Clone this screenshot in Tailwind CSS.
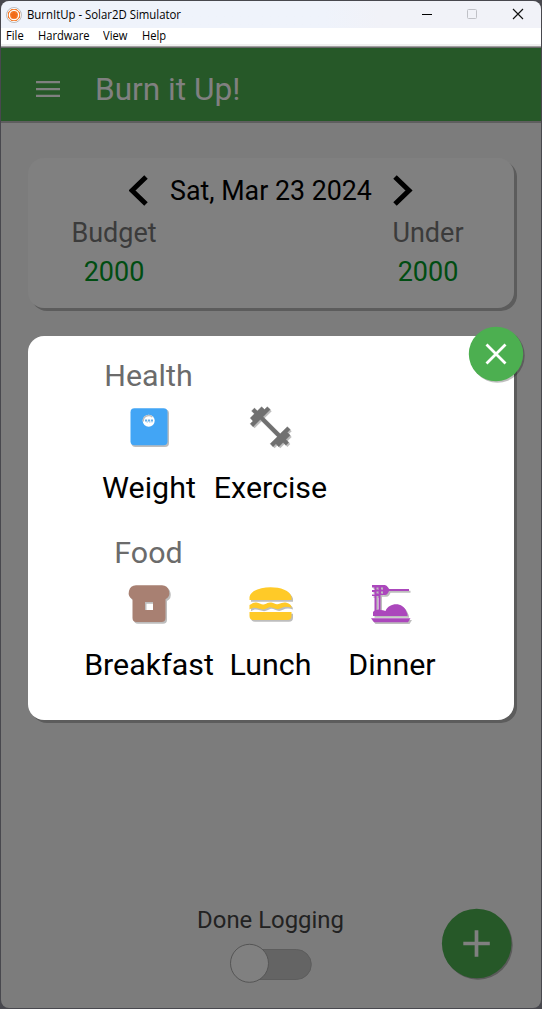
<!DOCTYPE html>
<html lang="en">
<head>
<meta charset="utf-8">
<title>BurnItUp - Solar2D Simulator</title>
<script src="https://cdn.jsdelivr.net/npm/@tailwindcss/browser@4"></script>
</head>
<body class="h-[1009px] w-[542px] overflow-hidden bg-[#48484e] p-px font-['Roboto',sans-serif]">
<div class="flex h-[1007px] w-[540px] flex-col overflow-hidden rounded-lg bg-[#7c7c7c]">
  <div class="flex h-[27px] shrink-0 items-center bg-linear-to-r from-[#eff3fb] from-60% to-[#f1f2f8] to-70% pl-[5px] font-['Open_Sans',sans-serif] text-xs text-black">
    <svg class="mr-[5px] size-4 shrink-0" viewBox="0 0 16 16"><circle cx="8" cy="8" r="7.500" fill="#fff" stroke="#a9adb3" stroke-width=".8"/><path d="M5.400 1.900h5.200l3.500 3.600v5.100l-3.500 3.500H5.400l-3.500-3.500V5.500z" fill="#f47a2a"/><circle cx="8" cy="8" r="4.600" fill="none" stroke="#fff" stroke-width="1.300"/><path d="m8 4.300 1.200 2.200 2.500.6-1.700 1.900.3 2.500L8 10.500l-2.300 1 .3-2.500-1.700-1.900 2.500-.6z" fill="#f26a18"/></svg>
    <span class="origin-left scale-x-[.948] whitespace-nowrap">BurnItUp - Solar2D Simulator</span>
    <svg class="ml-auto h-[27px] w-[130px] shrink-0" viewBox="411 1 130 27" fill="none"><path d="M422 14.500h10" stroke="#000"/><rect x="467.500" y="9.500" width="9" height="9" rx="1" stroke="#c0c1c7"/><path d="m513 9 10 10m0-10-10 10" stroke="#111" stroke-width="1.150"/></svg>
  </div>
  <div class="flex h-4 shrink-0 items-center bg-white pl-[5px] font-['Open_Sans',sans-serif] text-xs text-black">
    <span class="w-[32px]"><span class="inline-block origin-left scale-x-[.93]">File</span></span>
    <span class="w-[65px]"><span class="inline-block origin-left scale-x-[.93]">Hardware</span></span>
    <span class="w-[39px]"><span class="inline-block origin-left scale-x-[.93]">View</span></span>
    <span class="inline-block origin-left scale-x-[.93]">Help</span>
  </div>
  <div class="h-[2px] shrink-0 bg-[#f0f0f0]"></div>
  <div class="h-px shrink-0 bg-[#a0a0a0]"></div>
  <div class="h-px shrink-0 bg-[#696969]"></div>
  <header class="flex h-[73px] shrink-0 items-center bg-[#265828] pt-[8px] pl-[35px]">
    <svg class="mr-[35px] h-4 w-6" viewBox="0 0 24 16" fill="#808080"><path d="M0 0h24v2.300H0zM0 6.900h24v2.300H0zM0 13.700h24V16H0z"/></svg>
    <h1 class="pt-[2px] text-[31.600px] leading-none whitespace-nowrap text-[#808080]">Burn it Up!</h1>
  </header>
  <div class="h-[2px] shrink-0 bg-[#5e5e5e]"></div>

  <section class="mt-[35px] ml-[27px] h-[150px] w-[486px] shrink-0 rounded-2xl bg-[#808080] pt-[13px] shadow-[3px_3px_0_#5c5c5c]">
    <div class="flex h-10 items-center justify-center text-[26.800px] text-black">
      <svg class="mr-[21px] mb-[2px] h-[31px] w-[20px]" viewBox="0 0 20 31" fill="none" stroke="#000" stroke-width="5"><path d="M17 2 3 15.500 17 29"/></svg>
      <span class="whitespace-nowrap">Sat, Mar 23 2024</span>
      <svg class="mb-[2px] ml-[21px] h-[31px] w-[20px]" viewBox="0 0 20 31" fill="none" stroke="#000" stroke-width="5"><path d="M2 2 16 15.500 2 29"/></svg>
    </div>
    <div class="flex justify-between pt-[3px] pr-[11px] pl-[11px] text-center text-[27px] leading-[39px]">
      <div class="w-[150px]"><div class="text-[#3b3b3b]">Budget</div><div class="text-[#004d12]">2000</div></div>
      <div class="w-[150px]"><div class="text-[#3b3b3b]">Under</div><div class="text-[#004d12]">2000</div></div>
    </div>
  </section>

  <section class="relative mt-7 ml-[27px] h-[384px] w-[486px] shrink-0 rounded-2xl bg-white pt-[20px] pl-[60px] text-center text-[30.400px] leading-10 shadow-[3px_3px_0_#5c5c5c]">
    <svg class="absolute -top-[10px] -right-[11px] h-[58px] w-[58px]" viewBox="467 326 58 58"><circle cx="497.500" cy="355.500" r="27.200" fill="#000" fill-opacity=".25"/><circle cx="496" cy="354" r="27.200" fill="#4caf50"/><path d="m486.500 344.500 19 19m0-19-19 19" stroke="#fff" stroke-width="2.800"/></svg>
    <h2 class="w-[121px] text-[#6b6b6b]">Health</h2>
    <div class="flex">
      <div class="flex w-[122px] flex-col items-center">
        <svg class="h-[72px] w-[60px]" viewBox="119 396 60 72"><rect x="131.500" y="409.500" width="37.500" height="37.500" rx="4" fill="#bdbdbd"/><rect x="130.500" y="408.200" width="37" height="37" rx="4" fill="#42a5f5"/><circle cx="148.700" cy="420.700" r="6" fill="#fff"/><path d="M143.300 421.500a5.400 5.400 0 0 1 9-4.500" fill="none" stroke="#bdbdbd" stroke-width="1.500"/><path d="M145 420.500h8" stroke="#64aee9" stroke-width="1.800" stroke-dasharray="2.200 .8"/><path d="M146.500 422h6" stroke="#9bc4e6" stroke-dasharray="1.500 1"/></svg>
        <div>Weight</div>
      </div>
      <div class="flex w-[121px] flex-col items-center">
        <svg class="h-[72px] w-[60px]" viewBox="241 396 60 72"><defs><path id="bar" d="M20.570 14.860 22 13.430 20.570 12 17 15.570 8.430 7 12 3.430 10.570 2 9.140 3.430 7.710 2 5.570 4.140 4.140 2.710 2.710 4.140 4.140 5.570 2 7.710 3.430 9.140 2 10.570 3.430 12 7 8.430 15.570 17 12 20.570 13.430 22l1.430-1.430L16.290 22l2.140-2.140 1.430 1.430 1.430-1.430-1.430-1.430L22 16.290z"/></defs><use href="#bar" transform="translate(247.700 404.300) scale(2)" fill="#bdbdbd"/><use href="#bar" transform="translate(246.200 402.700) scale(2)" fill="#707070" stroke="#707070" stroke-width=".2"/></svg>
        <div>Exercise</div>
      </div>
    </div>
    <h2 class="mt-[25px] w-[121px] text-[#6b6b6b]">Food</h2>
    <div class="flex">
      <div class="flex w-[122px] flex-col items-center">
        <svg class="h-[72px] w-[60px]" viewBox="119 573 60 72"><defs><path id="toast" fill-rule="evenodd" d="M136 585.300h26a7.500 7.500 0 0 1 3.500 14V618a4 4 0 0 1-4 4H136.500a4 4 0 0 1-4-4v-18.700a7.500 7.500 0 0 1 3.500-14zM145 602v8h8v-8z"/></defs><use href="#toast" x="1.500" y="1.700" fill="#bdbdbd"/><use href="#toast" fill="#a88072"/></svg>
        <div class="whitespace-nowrap">Breakfast</div>
      </div>
      <div class="flex w-[121px] flex-col items-center">
        <svg class="h-[72px] w-[60px]" viewBox="241.500 573 60 72"><defs><path id="burger" d="M250 600v-3c2.500-13 39.500-13 42 0v3zM250 605c4-2.500 5-3 8-2.300 3 .8 4 2.300 7 1.500 3-1 4-2.300 7-1.600 3 .8 4 2.300 7 1.500 3-1 5-2 8-1.300 3 .7 5 2 5 5-4-1.400-7-1.300-10 .3-3 1.600-5 1.300-8 0-3-1.400-4-1.200-7 .3s-5 1.200-8 .2c-3-1.200-6-1.500-9 1zM250 612h42v4a4 4 0 0 1-4 4h-34a4 4 0 0 1-4-4z"/></defs><use href="#burger" x="1.500" y="1.700" fill="#bdbdbd"/><use href="#burger" fill="#ffca28"/></svg>
        <div>Lunch</div>
      </div>
      <div class="flex w-[122px] flex-col items-center">
        <svg class="h-[72px] w-[60px]" viewBox="363 573 60 72"><defs><path id="pasta" fill-rule="evenodd" d="M373 585h12c3 0 4 2.500 5 4h20v2h-20c-1 2-2 4.500-5 4h-3.500v15q2.500 0 5 1c4-9 18-9 21 1 1 1 1 3 1 4H374v-4l1.500-1.500V596H373v-1.500h2.500V592H373v-2h2.500v-2.500H373zM377.500 587.500h2v2h-2zM377.500 591.500h2v2h-2zM377.500 596h2v13.500l-2 .5zM382 587.500h2v2h-2zM382 591.500h2v2h-2zM372 618.300h39.500l-2.500 4h-34z"/></defs><use href="#pasta" x="1.500" y="1.700" fill="#bdbdbd"/><use href="#pasta" fill="#ab47bc"/></svg>
        <div>Dinner</div>
      </div>
    </div>
  </section>

  <footer class="mt-auto flex h-[109px] shrink-0 items-start pl-[197px]">
    <div class="w-[145px] pt-[6px]">
      <div class="flex h-[32px] items-center justify-center text-[23.900px] whitespace-nowrap text-[#222]">Done Logging</div>
      <svg class="mt-[5px] ml-[30px] h-[42px] w-[86px]" viewBox="228 942 86 42"><rect x="238" y="949.500" width="73.300" height="30" rx="15" fill="#646464" stroke="#5d5d5d"/><circle cx="249.500" cy="963.300" r="19" fill="#808080" stroke="#555"/></svg>
    </div>
    <svg class="mt-[7px] ml-[97px] h-[76px] w-[76px]" viewBox="440 906 76 76"><circle cx="478" cy="945" r="34.700" fill="#5a5a5a"/><circle cx="476.700" cy="943.500" r="34.800" fill="#265828"/><path d="M463.300 943.500h26.500M476.500 930.200v26.500" stroke="#808080" stroke-width="3.700"/></svg>
  </footer>
</div>
</body>
</html>
